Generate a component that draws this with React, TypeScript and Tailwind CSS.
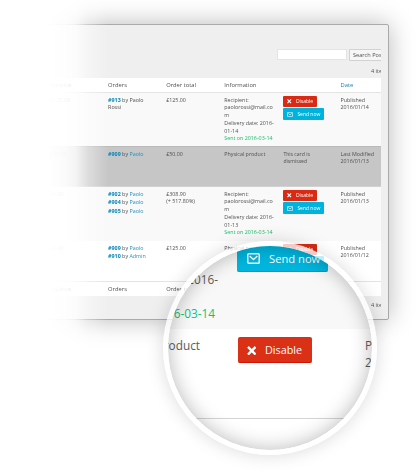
import type { ReactNode } from "react";

function Cross({ className }: { className: string }) {
  return (
    <svg viewBox="0 0 10 10" className={className} fill="none" stroke="currentColor" strokeWidth="2.5">
      <path d="M1 1 9 9M9 1 1 9" />
    </svg>
  );
}

function Mail({ className }: { className: string }) {
  return (
    <svg viewBox="0 0 13 11" className={className} fill="none" stroke="currentColor" strokeWidth="1.4" strokeLinejoin="round">
      <rect x="0.8" y="0.8" width="11.4" height="9.4" rx="0.8" />
      <path d="M2.6 3 6.5 6.6 10.4 3" />
    </svg>
  );
}

function Actions() {
  return (
    <div className="-mt-[0.5px] flex flex-col items-start gap-px pl-px text-[5px] leading-none font-medium text-white">
      <div className="flex h-[11px] w-[33.5px] items-center rounded-[1px] bg-[#d92b14] pl-1">
        <Cross className="mr-1 size-[4.5px]" />
        Disable
      </div>
      <div className="flex h-3 w-[41px] items-center rounded-[1px] bg-[#00b3dc] pl-1">
        <Mail className="mr-1 h-[5px] w-[6px]" />
        Send now
      </div>
    </div>
  );
}

function Order({ id, name, link = true }: { id: string; name: string; link?: boolean }) {
  return (
    <div className="leading-[8.3px] whitespace-nowrap">
      <b className="text-[#0085ba]">{id}</b> by <span className={link ? "text-[#2591bd]" : ""}>{name}</span>
    </div>
  );
}

function Row({ className, cells }: { className: string; cells: ReactNode[] }) {
  return (
    <div className={"grid shrink-0 grid-cols-[repeat(5,58.1px)_60px] overflow-hidden pl-[10px] " + className}>
      {cells.map((c, i) => (
        <div key={i}>{c}</div>
      ))}
    </div>
  );
}

function Info({ date }: { date: string }) {
  return (
    <>
      Recipient:<br />paolorossi@mail.co<br />m<br />Delivery date: 2016-<br />{date}<br />
      <span className="text-[#19bd69]">Sent on 2016-03-14</span>
    </>
  );
}

const heads = ["Balance", "Orders", "Order total", "Information", ""];
const body = "pt-[3.5px] text-[5.35px] leading-[7.8px] ";

function Panel() {
  return (
    <div className="h-[473px] w-[420px] pt-6 pl-8 [mask-image:linear-gradient(to_right,transparent_48px,rgba(0,0,0,.08)_66px,rgba(0,0,0,.2)_76px,rgba(0,0,0,.6)_88px,black_108px)]">
      <div className="flex h-[296px] w-[357px] flex-col rounded-[2px] border border-[#aaa] bg-[#efefef] pr-[7px] pl-[7px] shadow-[0_0_26px_rgba(0,0,0,0.28)]">
        <div className="flex h-[53px] flex-col items-end overflow-hidden">
          <div className="mt-[24px] flex h-3 w-[104px] shrink-0 gap-[2px] text-[5.6px] leading-[11px] whitespace-nowrap">
            <div className="h-[11px] w-[70px] shrink-0 border border-[#e4e4e4] bg-white" />
            <div className="h-3 w-[32px] overflow-hidden rounded-l-[1px] border border-r-0 border-[#d2d2d2] bg-[#f6f6f6] pl-[3px]">Search Posts</div>
          </div>
          <div className="mt-[6px] w-[10px] overflow-hidden text-[5.5px] leading-[8px] whitespace-nowrap">4 items</div>
        </div>
        <Row
          className="h-[15px] border-b border-[#e4e4e4] bg-white text-[5.8px] leading-[14px]"
          cells={[...heads, <span className="text-[#167fb5]">Date</span>]}
        />
        <Row
          className={body + "h-[53px] bg-[#f9f9f9]"}
          cells={["£125.00", <div className="-mt-[0.6px]"><Order id="#913" name="Paolo" link={false} />Rossi</div>, "£125.00", <Info date="01-14" />, <Actions />, <>Published<br />2016/01/14</>]}
        />
        <Row
          className={body + "h-[41px] border-y border-t-[#bababa] border-b-[#d2d2d2] bg-[#c6c6c6]"}
          cells={["£50.00", <div className="-mt-[0.6px]"><Order id="#909" name="Paolo" /></div>, "£50.00", "Physical product", <div className="pl-px text-[5.1px] leading-[7.4px]">This card is<br />dismissed</div>, <>Last Modified<br />2016/01/13</>]}
        />
        <Row
          className={body + "h-[54px] bg-[#f9f9f9]"}
          cells={["£0.00", <div className="-mt-[0.6px]"><Order id="#902" name="Paolo" /><Order id="#904" name="Paolo" /><Order id="#905" name="Paolo" /></div>, <>£308.90<br />(+ 517.80%)</>, <Info date="01-13" />, <Actions />, <>Published<br />2016/01/13</>]}
        />
        <Row
          className={body + "h-[40px] bg-white"}
          cells={["£0.00", <div className="-mt-[0.6px]"><Order id="#909" name="Paolo" /><Order id="#910" name="Admin" /></div>, "£125.00", "Physical product", <Actions />, <>Published<br />2016/01/12</>]}
        />
        <Row
          className="h-[15px] border-t border-[#e4e4e4] bg-white text-[5.8px] leading-[14px]"
          cells={[...heads, ""]}
        />
        <div className="mt-[5px] flex justify-end text-[5.5px] leading-[8px]">
          <div className="w-[10px] overflow-hidden whitespace-nowrap">4 items</div>
        </div>
      </div>
    </div>
  );
}

function Lens() {
  return (
    <div className="absolute top-[241px] left-[163px] size-[214px] rounded-full bg-white/75 p-[5px] shadow-[0_0_18px_rgba(0,0,0,0.15)]">
      <div className="relative size-[204px] overflow-hidden rounded-full bg-white text-[11.8px] leading-[17px] text-[#5c5c5c]">
        <div className="h-[83px] bg-[#f8f8f8]" />
        <div className="absolute top-[25px] right-[154px]">2016-</div>
        <div className="absolute top-[59px] right-[157px] whitespace-nowrap text-[#13c375]">Sent on 2016-03-14</div>
        <div className="absolute top-[91px] right-[172px] whitespace-nowrap">Physical product</div>
        <div className="absolute top-[-1px] left-[69px] flex h-[27px] w-[91px] items-center rounded-[2px] border-b border-[#00a1c9] bg-[#00b6de] pl-[10px] text-[11.2px] font-medium text-white">
          <Mail className="mr-[9px] h-[11px] w-[13px]" />
          Send now
        </div>
        <div className="absolute top-[91px] left-[69.5px] flex h-[26px] w-[74.5px] items-center rounded-[2px] border-b border-[#d01405] bg-[#d93016] pl-[9px] text-[10.8px] font-medium text-white">
          <Cross className="mt-[2px] mr-[9px] size-[9.5px]" />
          <span>Disable</span>
        </div>
        <div className="absolute top-[91px] left-[197px]">Published<br />2016/01/12</div>
        <div className="absolute top-[172px] left-0 h-px w-full bg-[#d4d4d4]" />
        <div className="absolute inset-0 rounded-full shadow-[inset_0_0_20px_rgba(0,0,0,0.28)]" />
      </div>
    </div>
  );
}

export default function App() {
  return (
    <div className="relative h-[473px] w-[420px] overflow-hidden bg-white font-['Open_Sans','Noto_Sans',sans-serif] text-[#505050]">
      <Panel />
      <Lens />
    </div>
  );
}
